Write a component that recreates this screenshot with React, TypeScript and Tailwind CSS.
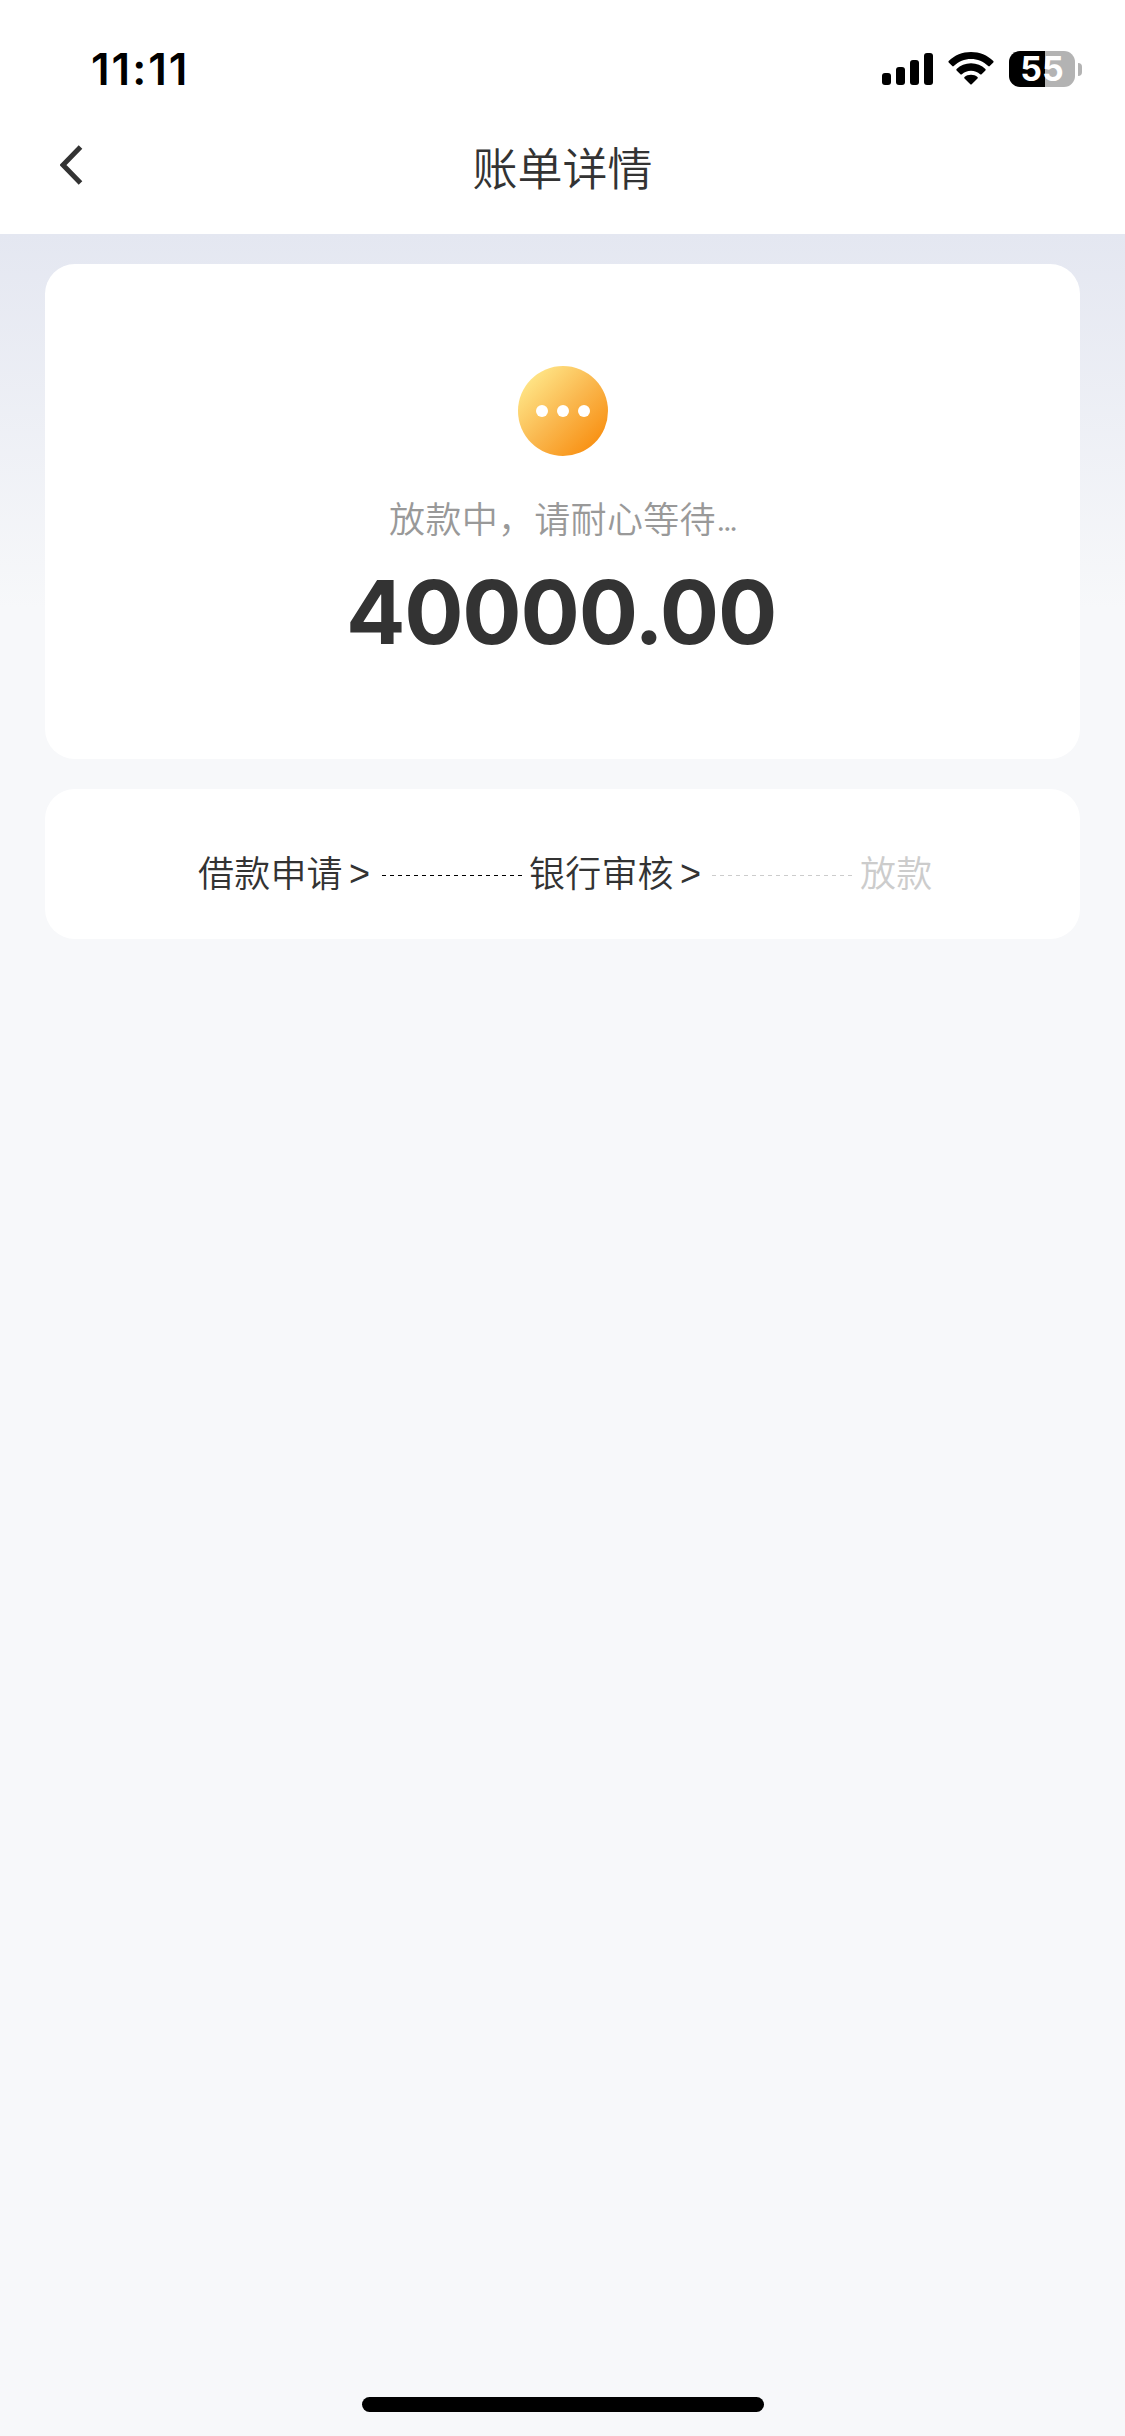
import React from 'react';

function StatusBar() {
  return (
    <div className="flex h-[102px] items-start justify-between pl-[91px] pr-[43px]">
      <div className="mt-[41px] font-['Inter'] text-[44px] leading-[56px] font-semibold tracking-[2px] text-black">11:11</div>
      <div className="mt-[51px] flex items-start">
        <svg width="51" height="34" viewBox="0 0 51 34" className="mt-[1px]">
          <rect x="0" y="21" width="9" height="12" rx="3" />
          <rect x="14" y="15" width="9" height="18" rx="3" />
          <rect x="28" y="8" width="9" height="25" rx="3" />
          <rect x="42" y="1" width="9" height="32" rx="3" />
        </svg>
        <svg width="46" height="34" viewBox="0 0 46 34" className="ml-[15px] mt-[1px]">
          <path d="M23 0C31.500 0 39.500 3.200 45.300 9Q46 9.800 45.300 10.600L41.700 14.100Q41 14.700 40.200 14C35.500 9.600 29.500 7 23 7S10.500 9.600 5.800 14Q5 14.700 4.300 14.100L.7 10.600Q0 9.800 .7 9C6.500 3.200 14.500 0 23 0Z" />
          <path d="M23 11.300C28.600 11.300 33.700 13.400 37.400 17Q38.100 17.700 37.400 18.400L33.600 22.200Q32.900 22.800 32.100 22.200C29.700 20 26.500 18.700 23 18.700S16.300 20 13.900 22.200Q13.100 22.800 12.400 22.200L8.600 18.400Q7.900 17.700 8.600 17C12.300 13.400 17.400 11.300 23 11.300Z" />
          <path d="M23 22.700C25.500 22.700 27.800 23.600 29.500 25Q30.200 25.700 29.500 26.400L23.700 32.200Q23 32.800 22.300 32.200L16.500 26.400Q15.800 25.700 16.500 25C18.200 23.600 20.500 22.700 23 22.700Z" />
        </svg>
        <div className="ml-[15px] flex items-center">
          <div className="flex h-[36px] w-[66px] items-center justify-center rounded-[11px] bg-[linear-gradient(to_right,#000_36px,#b3b3b3_36px)] font-['Inter'] text-[34px] leading-none font-bold text-white">
            55
          </div>
          <div className="ml-[3px] h-[13px] w-[4px] rounded-r-full bg-[#b3b3b3]" />
        </div>
      </div>
    </div>
  );
}

function NavBar() {
  return (
    <div className="grid h-[132px] grid-cols-[1fr_auto_1fr] items-center">
      <svg width="24" height="40" viewBox="0 0 24 40" fill="none" className="-mt-[7px] ml-[60px]">
        <path d="M20.500 2L3 20L20.500 38" stroke="#333" strokeWidth="5" />
      </svg>
      <h1 className="-mt-[2px] text-[45px] leading-[60px] font-[350] text-[#333]">账单详情</h1>
      <div />
    </div>
  );
}

function PendingIcon() {
  return (
    <div className="flex size-[90px] items-center justify-center gap-[9px] rounded-full bg-[linear-gradient(135deg,#ffe88a_10%,#fab84f_50%,#f88c0c_92%)]">
      <span className="size-[12px] rounded-full bg-white" />
      <span className="size-[12px] rounded-full bg-white" />
      <span className="size-[12px] rounded-full bg-white" />
    </div>
  );
}

function Step({ label }: { label: string }) {
  return (
    <>
      <span className="-mt-[9px] w-[145px] whitespace-nowrap">{label}</span>
      <span className="-mt-[3px] ml-[6px] w-[21px] font-['Liberation_Sans']">&gt;</span>
    </>
  );
}

export default function App() {
  return (
    <div className="flex h-[2436px] w-[1125px] flex-col bg-[#f7f8fa] font-['Noto_Sans_CJK_SC',sans-serif]">
      <header className="bg-white">
        <StatusBar />
        <NavBar />
      </header>
      <main className="flex flex-1 flex-col gap-[30px] bg-[linear-gradient(to_bottom,#e4e7f1_0px,#f7f8fa_375px)] px-[45px] pt-[30px]">
        <section className="flex h-[495px] flex-col items-center rounded-[30px] bg-white pt-[102px]">
          <PendingIcon />
          <p className="mt-[34px] mr-[1px] h-[54px] text-[36px] leading-[54px] font-[350] tracking-[0.300px] text-[#999]">
            放款中，请耐心等待<span className="align-[2px] font-['Inter'] leading-none tracking-[-3.800px]">...</span>
          </p>
          <p className="mt-[14px] mr-[3px] font-['Inter'] text-[88px] leading-[108px] font-bold tracking-[-1.200px] text-[#333]">40000.00</p>
        </section>
        <section className="flex h-[150px] items-center rounded-[30px] bg-white pt-[23px] pl-[153px] text-[36px] leading-[54px] font-[350] tracking-[0.200px] text-[#333]">
          <Step label="借款申请" />
          <div className="mr-[6px] ml-[12px] h-px w-[141px] bg-[repeating-linear-gradient(to_right,#000_0px,#000_4px,transparent_4px,transparent_8px)]" />
          <Step label="银行审核" />
          <div className="mr-[6px] ml-[11px] h-px w-[142px] bg-[repeating-linear-gradient(to_right,#ccc_0px,#ccc_4px,transparent_4px,transparent_8px)]" />
          <span className="-mt-[9px] text-[#ccc]">放款</span>
        </section>
      </main>
      <footer className="flex h-[39px] justify-center">
        <div className="h-[15px] w-[402px] rounded-full bg-black" />
      </footer>
    </div>
  );
}
